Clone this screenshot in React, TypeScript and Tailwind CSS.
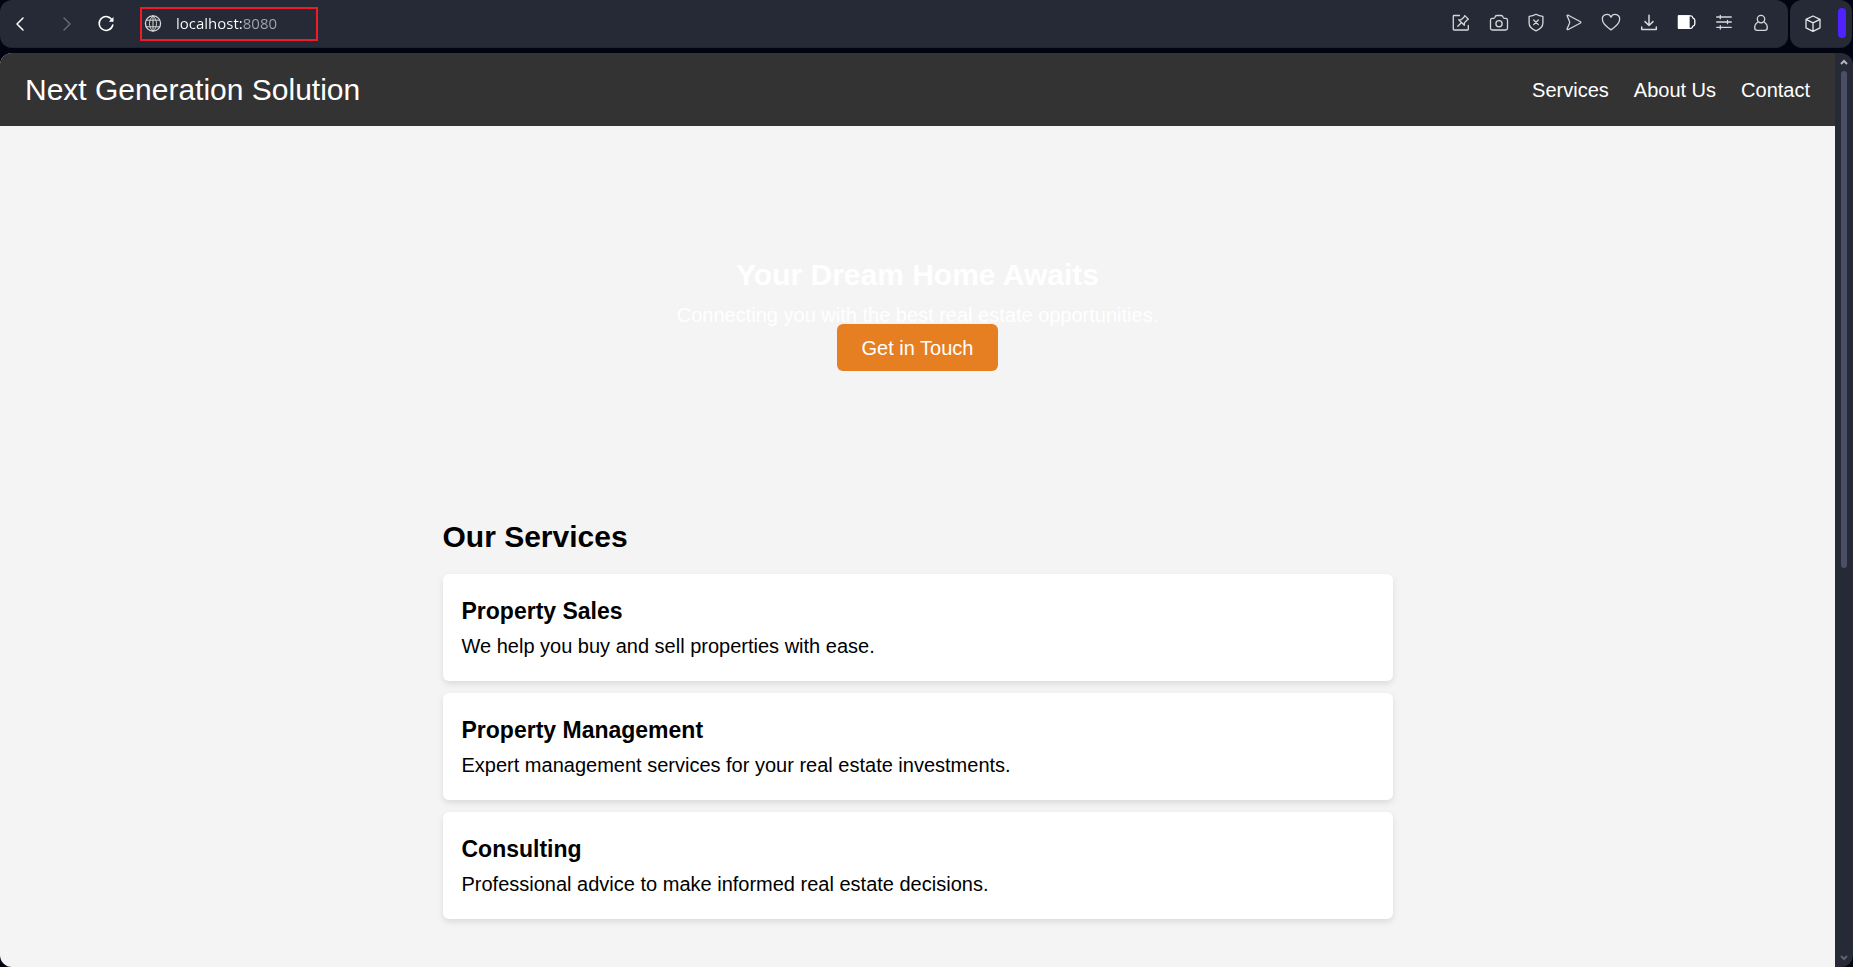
import type { ReactNode } from "react";

function Icon({ children, className = "" }: { children: ReactNode; className?: string }) {
  return (
    <svg
      viewBox="0 0 24 24"
      width="24"
      height="24"
      fill="none"
      stroke="currentColor"
      strokeWidth="1.3"
      strokeLinecap="round"
      strokeLinejoin="round"
      aria-hidden="true"
      className={className}
    >
      {children}
    </svg>
  );
}

const tools = [
  {
    label: "Pin to board",
    icon: (
      <>
        <path d="M10.5 4.5H5A.7.7 0 0 0 4.300 5.200V18.300A.7.7 0 0 0 5 19H18.600A.7.7 0 0 0 19.300 18.300V14.500" />
        <path d="M15.800 4.600L19.400 8.200L17.800 9.200L15.400 11.900L15.300 14.300L9.700 8.800L12.100 8.700L14.900 6.300ZM12.300 11.700L8.800 15.200" />
      </>
    ),
  },
  {
    label: "Snapshot",
    icon: (
      <>
        <path d="M3.500 9.200A1.800 1.800 0 0 1 5.300 7.400H6.500Q7.700 7.400 8 6.200Q8.300 4.500 10 4.500H14Q15.700 4.500 16 6.200Q16.300 7.400 17.500 7.400H18.700A1.800 1.800 0 0 1 20.500 9.200V17.200A1.800 1.800 0 0 1 18.700 19H5.300A1.800 1.800 0 0 1 3.500 17.200Z" />
        <circle cx="12" cy="12.700" r="3.100" />
      </>
    ),
  },
  {
    label: "Ad blocker",
    icon: (
      <>
        <path d="M12 3.300Q15 5.100 18.900 5.300V12Q18.900 17 12 19.800Q5.100 17 5.100 12V5.300Q9 5.100 12 3.300Z" />
        <path d="M9.700 9L14.300 13.600M14.300 9L9.700 13.600" />
      </>
    ),
  },
  {
    label: "My Flow",
    icon: <path d="M5 4.600Q5.400 3.800 6.300 4.200L18.500 10.700Q19.400 11.300 18.500 12L6.300 18.500Q5.200 18.900 5 17.900L7.500 12.300Q7.800 11.400 7.500 10.500Z" />,
  },
  {
    label: "Bookmark",
    icon: <path d="M12 18.900Q3.400 12.900 3.400 8.500A4.500 4.500 0 0 1 12 6.200A4.500 4.500 0 0 1 20.600 8.500Q20.600 12.900 12 18.900Z" />,
  },
  {
    label: "Downloads",
    icon: <path d="M12 4.300V14.300M8 10.600L12 14.500L16 10.600M4.700 16V18.600H19.300V16" strokeWidth="1.500" />,
  },
  {
    label: "Battery saver",
    icon: (
      <>
        <path d="M4.500 4.800H17Q18.500 4.800 18.700 6.800Q20.800 7.500 20.800 9V13Q20.800 14.500 18.700 15.300Q18.500 17.300 17 17.300H4.500Z" />
        <path d="M4.500 4.800H15V17.300H4.500Z" fill="currentColor" />
      </>
    ),
  },
  {
    label: "Easy setup",
    icon: <path d="M4.700 6H19.300M4.700 11H19.300M4.700 16.300H19.300M8.300 4.300V7.700M15.500 9.300V12.700M8.300 14.600V18" />,
  },
  {
    label: "Profile",
    icon: (
      <>
        <circle cx="12" cy="8.100" r="3.700" />
        <path d="M8.600 11.200Q5.700 13 5.700 16.700Q5.700 19.300 8.300 19.300H15.700Q18.300 19.300 18.300 16.700Q18.300 13 15.400 11.200" />
      </>
    ),
  },
];

const services = [
  { title: "Property Sales", text: "We help you buy and sell properties with ease." },
  { title: "Property Management", text: "Expert management services for your real estate investments." },
  { title: "Consulting", text: "Professional advice to make informed real estate decisions." },
];

function BrowserBar() {
  return (
    <div className="flex h-12 shrink-0 gap-0.5 pr-px text-[#d6d7da]">
      <div className="flex min-w-0 flex-1 items-center justify-between rounded-xl border-b border-[#20242e] bg-[#262a36] pr-[15px] pl-2">
        <div className="flex items-center">
          <button type="button" aria-label="Back" className="text-white">
            <Icon><path d="M15 6L9 12L15 18" strokeWidth="1.500" /></Icon>
          </button>
          <button type="button" aria-label="Forward" className="ml-[23px] text-[#6c6f78]">
            <Icon><path d="M9 6L15 12L9 18" /></Icon>
          </button>
          <button type="button" aria-label="Reload" className="mr-[22px] ml-[15px] text-white">
            <Icon>
              <path d="M18.300 8.500A6.900 6.900 0 1 0 18.800 13" strokeWidth="1.500" />
              <path d="M19.500 5V9.700H14.800Z" fill="currentColor" stroke="none" />
            </Icon>
          </button>
          <label className="flex h-[34px] w-[178px] items-center border-2 border-[#ee1c25]">
            <Icon className="-ml-px shrink-0">
              <circle cx="12" cy="11.500" r="7.600" />
              <path d="M12 3.900C7.300 7.500 7.300 15.500 12 19.100C16.700 15.500 16.700 7.500 12 3.900ZM5.400 8.200H18.600M5.400 14.800H18.600M12 3.900V19.100" strokeWidth="1" />
            </Icon>
            <input
              aria-label="Address"
              defaultValue="localhost:8080"
              className="ml-[11px] w-32 bg-[linear-gradient(90deg,#ffffff_67px,#9fa8b5_67px)] bg-clip-text font-['Open_Sans','Noto_Sans',sans-serif] text-[15px] text-transparent outline-none"
            />
          </label>
        </div>
        <div className="mb-0.5 flex w-[324px] shrink-0 justify-between">
          {tools.map((tool) => (
            <button
              key={tool.label}
              type="button"
              aria-label={tool.label}
              className={tool.label === "Battery saver" ? "text-white" : ""}
            >
              <Icon>{tool.icon}</Icon>
            </button>
          ))}
        </div>
      </div>
      <div className="flex w-[62px] shrink-0 items-center justify-between rounded-xl border-b border-[#20242e] bg-[#262a36] pr-1.5 pl-[11px]">
        <button type="button" aria-label="Extensions" className="text-[#e4e5e8]">
          <Icon><path d="M12 4L19 7.300V15.800L12 19.300L5 15.800V7.300ZM5 7.300L12 10.800L19 7.300M12 10.800V19.300" /></Icon>
        </button>
        <div className="mb-0.5 h-[30px] w-2 rounded-full bg-[#4f22ff]" />
      </div>
    </div>
  );
}

function Scrollbar() {
  return (
    <div className="flex w-[18px] shrink-0 flex-col items-center justify-between bg-[#262a36] py-1.5" aria-hidden="true">
      <div className="flex min-h-0 flex-1 flex-col items-center gap-1.5">
        <svg width="8" height="6" viewBox="0 0 8 6" className="shrink-0" fill="none" stroke="#b4b5b9" strokeWidth="2">
          <path d="M1 5L4 2L7 5" />
        </svg>
        <div className="h-[55.5%] w-1.5 rounded-full bg-[#4b4f66]" />
      </div>
      <svg width="8" height="6" viewBox="0 0 8 6" fill="none" stroke="#62646a" strokeWidth="2">
        <path d="M1 1L4 4L7 1" />
      </svg>
    </div>
  );
}

export default function App() {
  return (
    <div className="flex h-screen flex-col gap-[5px] bg-[#020412] font-['Liberation_Sans',Arial,sans-serif] text-xl">
      <BrowserBar />
      <div className="flex min-h-0 flex-1 overflow-hidden rounded-xl">
        <div className="min-w-0 flex-1 overflow-hidden bg-[#f4f4f4] text-black">
          <header className="flex items-center justify-between bg-[#333333] px-[25px] py-[14px] text-white">
            <div className="text-[30px] leading-[45px]">Next Generation Solution</div>
            <nav className="flex gap-[25px]">
              <a href="#services">Services</a>
              <a href="#about">About Us</a>
              <a href="#contact">Contact</a>
            </nav>
          </header>
          <section className="px-[25px] py-[125px] text-center text-white">
            <h1 className="text-[30px] leading-[48px] font-bold">Your Dream Home Awaits</h1>
            <p className="leading-8">Connecting you with the best real estate opportunities.</p>
            <a
              href="#contact"
              className="relative z-10 -mt-[7px] inline-block rounded-md bg-[#e67e22] px-[25px] pt-0.5 leading-[45px]"
            >
              Get in Touch
            </a>
          </section>
          <main id="services" className="mx-auto max-w-[1000px] px-[25px] pt-[17px]">
            <h2 className="mb-[13px] text-[30px] leading-[48px] font-bold">Our Services</h2>
            <div className="flex flex-col gap-3">
              {services.map((service) => (
                <article
                  key={service.title}
                  className="rounded-md bg-white px-[19px] pt-[19px] pb-[17px] shadow-[0_3px_6px_rgba(0,0,0,0.1)]"
                >
                  <h3 className="text-[23px] leading-9 font-bold">{service.title}</h3>
                  <p className="leading-[35px]">{service.text}</p>
                </article>
              ))}
            </div>
          </main>
        </div>
        <Scrollbar />
      </div>
    </div>
  );
}
